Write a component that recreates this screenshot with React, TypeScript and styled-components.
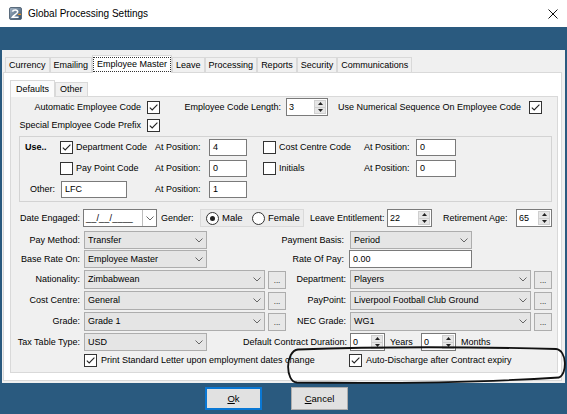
import React from "react";
import styled, { createGlobalStyle } from "styled-components";

const BLUE = "#2a5a7f";
const FONT = `"Liberation Sans", Arial, sans-serif`;

const GlobalStyle = createGlobalStyle`
  * { box-sizing: border-box; }
  html, body { margin: 0; padding: 0; background: ${BLUE}; }
  body { font-family: ${FONT}; font-size: 9px; color: #000; overflow: hidden; }
`;

const Window = styled.div`
  position: relative;
  width: 567px;
  height: 414px;
  display: flex;
  flex-direction: column;
  background: ${BLUE};
  font-family: ${FONT};
  font-size: 9px;
  line-height: 1;
  overflow: hidden;
`;

const TitleBar = styled.div`
  flex: none;
  height: 27px;
  background: #fff;
  display: flex;
  align-items: center;
  padding: 0 9px 0 9px;
`;

const TitleText = styled.span`
  margin-left: 6px;
  font-size: 10px;
  color: #000;
`;

const CloseGlyph = styled.span`
  margin-left: auto;
  display: flex;
`;

const Band = styled.div`
  flex: none;
  height: 23px;
`;

const Body = styled.div`
  flex: 1;
  margin: 0 2px;
  background: #f0f0f0;
  display: flex;
  flex-direction: column;
  padding: 5px 3px 2px 1px;
  min-height: 0;
`;

const TabStrip = styled.div<{ $h: number; $pl: number }>`
  flex: none;
  position: relative;
  z-index: 2;
  height: ${(p) => p.$h}px;
  display: flex;
  align-items: flex-end;
  padding-left: ${(p) => p.$pl}px;
`;

const Tab = styled.div<{ $active?: boolean; $h: number; $px: number; $bg: string }>`
  flex: none;
  height: ${(p) => p.$h}px;
  padding: 0 ${(p) => p.$px}px;
  display: flex;
  align-items: center;
  white-space: nowrap;
  background: ${(p) => p.$bg};
  border: 1px solid #d9d9d9;
  border-bottom: ${(p) => (p.$active ? "none" : "1px solid #d9d9d9")};
`;

const FocusRect = styled.span`
  height: 15px;
  display: flex;
  align-items: center;
  padding: 0 3px;
  border: 1px dotted #333;
`;

const OuterPanel = styled.div`
  flex: 1;
  position: relative;
  z-index: 1;
  margin-top: -1px;
  background: #fff;
  border: 1px solid #d9d9d9;
  display: flex;
  flex-direction: column;
  padding: 7px 3px 7px 6px;
  min-height: 0;
`;

const InnerPanel = styled.div`
  flex: 1;
  position: relative;
  z-index: 1;
  margin-top: -1px;
  background: #f0f0f0;
  border: 1px solid #d9d9d9;
  display: flex;
  flex-direction: column;
  padding-top: 1px;
  min-height: 0;
`;

const Row = styled.div<{ $h: number; $mt?: number }>`
  flex: none;
  height: ${(p) => p.$h}px;
  margin-top: ${(p) => p.$mt ?? 0}px;
  display: flex;
  align-items: center;
`;

const Label = styled.span<{ $w?: number; $ml?: number; $right?: boolean; $bold?: boolean; $pr?: number }>`
  flex: none;
  white-space: nowrap;
  width: ${(p) => (p.$w ? `${p.$w}px` : "auto")};
  margin-left: ${(p) => p.$ml ?? 0}px;
  padding-right: ${(p) => p.$pr ?? 0}px;
  text-align: ${(p) => (p.$right ? "right" : "left")};
  font-weight: ${(p) => (p.$bold ? 700 : 400)};
`;

const CheckBox = styled.span<{ $ml?: number }>`
  flex: none;
  width: 13px;
  height: 13px;
  margin-left: ${(p) => p.$ml ?? 0}px;
  border: 1px solid #333;
  background: #fff;
  display: inline-flex;
  align-items: center;
  justify-content: center;
`;

const Check = ({ checked, ml }: { checked?: boolean; ml?: number }) => (
  <CheckBox $ml={ml}>
    {checked && (
      <svg width="11" height="11" viewBox="0 0 11 11">
        <path d="M1.8 5.6 L4.2 8 L9.4 2.6" fill="none" stroke="#222" strokeWidth="1.1" />
      </svg>
    )}
  </CheckBox>
);

const RadioCircle = styled.span<{ $on?: boolean }>`
  flex: none;
  width: 13px;
  height: 13px;
  border-radius: 50%;
  border: 1px solid #333;
  background: #fff;
  display: inline-flex;
  align-items: center;
  justify-content: center;
  &::after {
    content: "";
    width: 5px;
    height: 5px;
    border-radius: 50%;
    background: ${(p) => (p.$on ? "#222" : "transparent")};
  }
`;

const RadioGroup = styled.div<{ $w: number }>`
  flex: none;
  width: ${(p) => p.$w}px;
  height: 18px;
  display: flex;
  align-items: center;
  padding-left: 5px;
  background: #ececec;
  border: 1px solid #dadada;
`;

const RadioItem = styled.span<{ $w?: number }>`
  flex: none;
  width: ${(p) => (p.$w ? `${p.$w}px` : "auto")};
  display: flex;
  align-items: center;
  gap: 3px;
  font-size: 9.5px;
`;

const ComboBox = styled.div<{ $w: number; $h: number; $ml?: number }>`
  flex: none;
  width: ${(p) => p.$w}px;
  height: ${(p) => p.$h}px;
  margin-left: ${(p) => p.$ml ?? 0}px;
  display: flex;
  align-items: center;
  justify-content: space-between;
  padding: 0 3px 0 3px;
  background: #e5e5e5;
  border: 1px solid #adadad;
  white-space: nowrap;
`;

const Chevron = () => (
  <svg width="8" height="5" viewBox="0 0 8 5">
    <polyline points="0.5,0.5 4,4 7.5,0.5" fill="none" stroke="#666" strokeWidth="1" />
  </svg>
);

const Combo = ({ w, h, ml, value }: { w: number; h: number; ml?: number; value: string }) => (
  <ComboBox $w={w} $h={h} $ml={ml}>
    <span>{value}</span>
    <Chevron />
  </ComboBox>
);

const TextBox = styled.div<{ $w: number; $h: number; $ml?: number }>`
  flex: none;
  width: ${(p) => p.$w}px;
  height: ${(p) => p.$h}px;
  margin-left: ${(p) => p.$ml ?? 0}px;
  display: flex;
  align-items: center;
  padding-left: 3px;
  background: #fff;
  border: 1px solid #7a7a7a;
  white-space: nowrap;
`;

const DateBox = styled.div<{ $w: number; $ml?: number }>`
  flex: none;
  width: ${(p) => p.$w}px;
  height: 18px;
  margin-left: ${(p) => p.$ml ?? 0}px;
  display: flex;
  background: #fff;
  border: 1px solid #7a7a7a;
`;

const DateText = styled.span`
  flex: 1;
  display: flex;
  align-items: center;
  padding-left: 2px;
  letter-spacing: 0.2px;
`;

const DateDrop = styled.span`
  flex: none;
  width: 14px;
  display: flex;
  align-items: center;
  justify-content: center;
  border-left: 1px solid #bdbdbd;
`;

const SpinBox = styled.div<{ $w: number; $ml?: number }>`
  flex: none;
  width: ${(p) => p.$w}px;
  height: 18px;
  margin-left: ${(p) => p.$ml ?? 0}px;
  display: flex;
  background: #fff;
  border: 1px solid #7a7a7a;
`;

const SpinValue = styled.span`
  flex: 1;
  display: flex;
  align-items: center;
  padding-left: 2px;
`;

const SpinArrows = styled.span`
  flex: none;
  width: 12px;
  margin: 1px;
  display: flex;
  flex-direction: column;
  background: #e6e6e6;
  border: 1px solid #cfcfcf;
`;

const SpinHalf = styled.span<{ $top?: boolean }>`
  flex: 1;
  display: flex;
  align-items: center;
  justify-content: center;
  border-bottom: ${(p) => (p.$top ? "1px solid #cfcfcf" : "none")};
`;

const Spin = ({ w, ml, value }: { w: number; ml?: number; value: string }) => (
  <SpinBox $w={w} $ml={ml}>
    <SpinValue>{value}</SpinValue>
    <SpinArrows>
      <SpinHalf $top>
        <svg width="5" height="3" viewBox="0 0 5 3">
          <polygon points="0,3 2.5,0 5,3" fill="#222" />
        </svg>
      </SpinHalf>
      <SpinHalf>
        <svg width="5" height="3" viewBox="0 0 5 3">
          <polygon points="0,0 2.5,3 5,0" fill="#222" />
        </svg>
      </SpinHalf>
    </SpinArrows>
  </SpinBox>
);

const DotsButton = styled.div<{ $ml?: number }>`
  flex: none;
  width: 18px;
  height: 18px;
  margin-left: ${(p) => p.$ml ?? 3}px;
  display: flex;
  align-items: flex-end;
  justify-content: center;
  padding-bottom: 3px;
  background: #e8e8e8;
  border: 1px solid #adadad;
  font-size: 8px;
`;

const GroupBox = styled.div`
  flex: none;
  height: 66px;
  margin: 3px 5px 0 8px;
  padding: 2px 0;
  border: 1px solid #d3d3d3;
  display: grid;
  grid-template-columns: 38px 94px 55px 50px 103px 53px 1fr;
  grid-template-rows: repeat(3, 17px);
  row-gap: 4px;
`;

const Cell = styled.div<{ $pl?: number; $pr?: number; $right?: boolean }>`
  display: flex;
  align-items: center;
  gap: 3px;
  white-space: nowrap;
  padding-left: ${(p) => p.$pl ?? 0}px;
  padding-right: ${(p) => p.$pr ?? 0}px;
  justify-content: ${(p) => (p.$right ? "flex-end" : "flex-start")};
`;

const Footer = styled.div`
  flex: none;
  height: 31px;
  display: flex;
  align-items: flex-start;
  gap: 29px;
  padding: 4px 0 0 205px;
`;

const DialogButton = styled.div<{ $default?: boolean }>`
  width: 57px;
  height: 23px;
  display: flex;
  align-items: center;
  justify-content: center;
  background: #e1e1e1;
  border: ${(p) => (p.$default ? "2px solid #0a78d4" : "1px solid #adadad")};
  font-size: 9.5px;
`;

const AnnotationLayer = styled.svg`
  position: absolute;
  left: 0;
  top: 0;
  pointer-events: none;
  z-index: 5;
`;

const AppIcon = () => (
  <svg width="13" height="13" viewBox="0 0 13 13">
    <defs>
      <linearGradient id="appg" x1="0" y1="0" x2="1" y2="1">
        <stop offset="0" stopColor="#a8b8c8" />
        <stop offset="1" stopColor="#2f4a66" />
      </linearGradient>
    </defs>
    <rect x="0.5" y="0.5" width="12" height="12" rx="1.5" fill="url(#appg)" stroke="#5a6b7c" />
    <path d="M3.4 4.6 C4.4 2.4 9 2.6 8.7 5 C8.5 6.8 5 7.6 3.4 10.2 L9.6 10.2" fill="none" stroke="#fff" strokeWidth="1.6" />
    <path d="M9.2 7.4 L12 7.4" stroke="#f0961c" strokeWidth="1.2" />
  </svg>
);

const outerTabs = ["Currency", "Emailing", "Employee Master", "Leave", "Processing", "Reports", "Security", "Communications"];

export default function App() {
  return (
    <>
      <GlobalStyle />
      <Window>
        <TitleBar>
          <AppIcon />
          <TitleText>Global Processing Settings</TitleText>
          <CloseGlyph>
            <svg width="10" height="10" viewBox="0 0 10 10">
              <path d="M0.5 0.5 L9.5 9.5 M9.5 0.5 L0.5 9.5" stroke="#111" strokeWidth="1" />
            </svg>
          </CloseGlyph>
        </TitleBar>
        <Band />
        <Body>
          <TabStrip $h={18} $pl={2}>
            {outerTabs.map((t) =>
              t === "Employee Master" ? (
                <Tab key={t} $active $h={18} $px={0} $bg="#fff">
                  <FocusRect>{t}</FocusRect>
                </Tab>
              ) : (
                <Tab key={t} $h={16} $px={3} $bg="#f0f0f0">
                  {t}
                </Tab>
              )
            )}
          </TabStrip>
          <OuterPanel>
            <TabStrip $h={17} $pl={0}>
              <Tab $active $h={17} $px={5} $bg="#fbfbfb">
                Defaults
              </Tab>
              <Tab $h={15} $px={4} $bg="#f0f0f0">
                Other
              </Tab>
            </TabStrip>
            <InnerPanel>
              <Row $h={18}>
                <Label $w={130} $right>
                  Automatic Employee Code
                </Label>
                <Check checked ml={6} />
                <Label $w={121} $right>
                  Employee Code Length:
                </Label>
                <Spin w={42} ml={5} value="3" />
                <Label $w={193} $right>
                  Use Numerical Sequence On Employee Code
                </Label>
                <Check checked ml={8} />
              </Row>
              <Row $h={16} $mt={1}>
                <Label $w={130} $right>
                  Special Employee Code Prefix
                </Label>
                <Check checked ml={6} />
              </Row>

              <GroupBox>
                <Cell $pl={5}>
                  <Label $bold>Use..</Label>
                </Cell>
                <Cell $pl={2}>
                  <Check checked />
                  <span>Department Code</span>
                </Cell>
                <Cell $pl={3}>At Position:</Cell>
                <Cell $pl={2}>
                  <TextBox $w={38} $h={17}>4</TextBox>
                </Cell>
                <Cell $pl={6}>
                  <Check />
                  <span>Cost Centre Code</span>
                </Cell>
                <Cell $pl={4}>At Position:</Cell>
                <Cell $pl={3}>
                  <TextBox $w={40} $h={17}>0</TextBox>
                </Cell>

                <Cell />
                <Cell $pl={2}>
                  <Check />
                  <span>Pay Point Code</span>
                </Cell>
                <Cell $pl={3}>At Position:</Cell>
                <Cell $pl={2}>
                  <TextBox $w={38} $h={17}>0</TextBox>
                </Cell>
                <Cell $pl={6}>
                  <Check />
                  <span>Initials</span>
                </Cell>
                <Cell $pl={4}>At Position:</Cell>
                <Cell $pl={3}>
                  <TextBox $w={40} $h={17}>0</TextBox>
                </Cell>

                <Cell $right $pr={3}>
                  Other:
                </Cell>
                <Cell $pl={3}>
                  <TextBox $w={66} $h={17}>LFC</TextBox>
                </Cell>
                <Cell $pl={3}>At Position:</Cell>
                <Cell $pl={2}>
                  <TextBox $w={38} $h={17}>1</TextBox>
                </Cell>
              </GroupBox>

              <Row $h={18} $mt={7}>
                <Label $w={69} $right>
                  Date Engaged:
                </Label>
                <DateBox $w={74} $ml={3}>
                  <DateText>__/__/____</DateText>
                  <DateDrop>
                    <Chevron />
                  </DateDrop>
                </DateBox>
                <Label $w={39} $ml={4}>
                  Gender:
                </Label>
                <RadioGroup $w={104}>
                  <RadioItem $w={46}>
                    <RadioCircle $on />
                    <span>Male</span>
                  </RadioItem>
                  <RadioItem>
                    <RadioCircle />
                    <span>Female</span>
                  </RadioItem>
                </RadioGroup>
                <Label $w={77} $ml={6}>
                  Leave Entitlement:
                </Label>
                <Spin w={45} value="22" />
                <Label $w={73} $ml={11}>
                  Retirement Age:
                </Label>
                <Spin w={36} value="65" />
              </Row>

              <Row $h={18} $mt={4}>
                <Label $w={69} $right>
                  Pay Method:
                </Label>
                <Combo w={123} h={18} ml={4} value="Transfer" />
                <Label $w={139} $right $pr={2}>
                  Payment Basis:
                </Label>
                <Combo w={122} h={18} ml={4} value="Period" />
              </Row>

              <Row $h={18} $mt={1}>
                <Label $w={69} $right>
                  Base Rate On:
                </Label>
                <Combo w={123} h={18} ml={4} value="Employee Master" />
                <Label $w={139} $right $pr={2}>
                  Rate Of Pay:
                </Label>
                <TextBox $w={123} $h={18} $ml={3}>
                  0.00
                </TextBox>
              </Row>

              <Row $h={19} $mt={2}>
                <Label $w={69} $right>
                  Nationality:
                </Label>
                <Combo w={181} h={19} ml={4} value="Zimbabwean" />
                <DotsButton>...</DotsButton>
                <Label $w={60} $right>
                  Department:
                </Label>
                <Combo w={181} h={19} ml={4} value="Players" />
                <DotsButton>...</DotsButton>
              </Row>

              <Row $h={19} $mt={2}>
                <Label $w={69} $right>
                  Cost Centre:
                </Label>
                <Combo w={181} h={19} ml={4} value="General" />
                <DotsButton>...</DotsButton>
                <Label $w={60} $right>
                  PayPoint:
                </Label>
                <Combo w={181} h={19} ml={4} value="Liverpool Football Club Ground" />
                <DotsButton>...</DotsButton>
              </Row>

              <Row $h={19} $mt={2}>
                <Label $w={69} $right>
                  Grade:
                </Label>
                <Combo w={181} h={19} ml={4} value="Grade 1" />
                <DotsButton>...</DotsButton>
                <Label $w={60} $right>
                  NEC Grade:
                </Label>
                <Combo w={181} h={19} ml={4} value="WG1" />
                <DotsButton>...</DotsButton>
              </Row>

              <Row $h={18} $mt={2}>
                <Label $w={69} $right>
                  Tax Table Type:
                </Label>
                <Combo w={123} h={18} ml={4} value="USD" />
                <Label $w={140} $right>
                  Default Contract Duration:
                </Label>
                <Spin w={35} ml={3} value="0" />
                <Label $w={31} $ml={5}>
                  Years
                </Label>
                <Spin w={35} value="0" />
                <Label $ml={5}>Months</Label>
              </Row>

              <Row $h={13} $mt={3}>
                <Check checked ml={73} />
                <Label $w={248} $ml={4}>
                  Print Standard Letter upon employment dates change
                </Label>
                <Check checked />
                <Label $ml={4}>Auto-Discharge after Contract expiry</Label>
              </Row>
            </InnerPanel>
          </OuterPanel>
        </Body>
        <Footer>
          <DialogButton $default>
            <span>
              <u>O</u>k
            </span>
          </DialogButton>
          <DialogButton>
            <span>
              <u>C</u>ancel
            </span>
          </DialogButton>
        </Footer>
        <AnnotationLayer width="567" height="414" viewBox="0 0 567 414">
          <path
            d="M298 349.5 C380 346.5 480 347 556 349 C567 350 567.5 374 559 377.5 C480 382.5 380 383.5 297 382.5 C285 382 285 351 298 349.5 Z"
            fill="none"
            stroke="#111"
            strokeWidth="1.8"
          />
        </AnnotationLayer>
      </Window>
    </>
  );
}
